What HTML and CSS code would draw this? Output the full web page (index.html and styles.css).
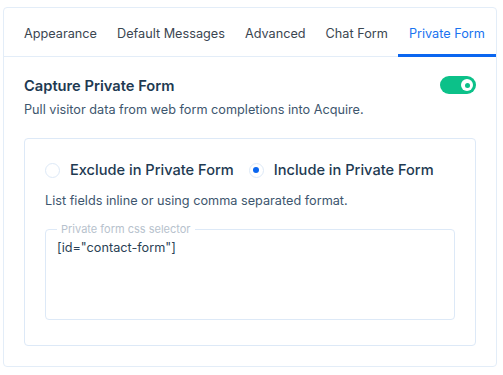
FILE: index.html
```html
<!DOCTYPE html>
<html>
<head>
<meta charset="utf-8">
<link rel="stylesheet" href="styles.css">
</head>
<body>
<div class="card">
  <nav class="tabs">
    <div class="tab">Appearance</div>
    <div class="tab">Default Messages</div>
    <div class="tab">Advanced</div>
    <div class="tab">Chat Form</div>
    <div class="tab active">Private Form</div>
  </nav>
  <div class="content">
    <div class="head">
      <div>
        <div class="title">Capture Private Form</div>
        <div class="sub">Pull visitor data from web form completions into Acquire.</div>
      </div>
      <div class="toggle"><span class="knob"></span></div>
    </div>
    <div class="box">
      <div class="radios">
        <label class="radio"><span class="circle"></span><span class="rlabel">Exclude in Private Form</span></label>
        <label class="radio"><span class="circle checked"></span><span class="rlabel">Include in Private Form</span></label>
      </div>
      <div class="hint">List fields inline or using comma separated format.</div>
      <fieldset class="field">
        <legend>Private form css selector</legend>
        <div class="value">[id="contact-form"]</div>
      </fieldset>
    </div>
  </div>
</div>
</body>
</html>
```
FILE: styles.css
```css
* { box-sizing: border-box; }
html, body { margin: 0; background: #fff; }
body {
  padding: 7px 6px 0 3px;
  font-family: Inter, "Noto Sans", sans-serif;
  -webkit-font-smoothing: antialiased;
}
.card {
  width: 494px;
  height: 360px;
  border: 1px solid #e3edf8;
  border-radius: 4px;
  display: flex;
  flex-direction: column;
}
.tabs {
  display: flex;
  height: 49px;
  padding-left: 10px;
  border-bottom: 1px solid #e3edf8;
}
.tab {
  padding: 0 10px;
  font-size: 12.7px;
  color: #3b4651;
  display: flex;
  align-items: center;
  white-space: nowrap;
  border-bottom: 3px solid transparent;
  margin-bottom: -1px;
  padding-top: 4px;
}
.tab.active {
  color: #1a73f0;
  border-bottom-color: #0a66f0;
  padding: 4px 11px 0;
}
.content {
  padding: 20px 20px 20px;
  flex: 1;
  display: flex;
  flex-direction: column;
}
.head {
  display: flex;
  justify-content: space-between;
  align-items: flex-start;
}
.title {
  font-size: 14.7px;
  font-weight: 600;
  color: #1e3a52;
  line-height: 19px;
}
.sub {
  font-size: 12.7px;
  color: #3d566e;
  margin-top: 5px;
  line-height: 17px;
  white-space: nowrap;
}
.toggle {
  width: 36px;
  height: 18px;
  border-radius: 9px;
  background: #0cc189;
  position: relative;
  margin-top: -1px;
}
.knob {
  position: absolute;
  right: 3px;
  top: 3px;
  width: 12px;
  height: 12px;
  border-radius: 50%;
  background: #fff;
}
.knob::after {
  content: "";
  position: absolute;
  left: 3.5px;
  top: 3.5px;
  width: 5px;
  height: 5px;
  border-radius: 50%;
  background: #0cc189;
}
.box {
  margin-top: 20px;
  flex: 1;
  border: 1px solid #dde9f7;
  border-radius: 4px;
  padding: 20px 20px 25px;
  display: flex;
  flex-direction: column;
}
.radios {
  display: flex;
  gap: 15px;
  height: 22px;
  align-items: center;
}
.radio {
  display: flex;
  align-items: center;
  white-space: nowrap;
}
.circle {
  width: 15px;
  height: 15px;
  border-radius: 50%;
  border: 1px solid #dde9f7;
  margin-right: 10px;
  position: relative;
  background: #fff;
}
.circle.checked::after {
  content: "";
  position: absolute;
  left: 3.5px;
  top: 3.5px;
  width: 6px;
  height: 6px;
  border-radius: 50%;
  background: #0a66f0;
}
.rlabel {
  font-size: 14.6px;
  font-weight: 500;
  color: #1e3a52;
}
.hint {
  font-size: 12.7px;
  color: #3d566e;
  margin-top: 11px;
  line-height: 17px;
  white-space: nowrap;
}
.field {
  margin: 14px 0 0;
  flex: 1;
  border: 1px solid #dde9f7;
  border-radius: 4px;
  padding: 0 11px;
  min-width: 0;
}
.field legend {
  font-size: 11px;
  color: #b7c2cd;
  padding: 0 4px;
  margin-left: 0;
  line-height: 12px;
}
.value {
  font-size: 12.7px;
  color: #2a3f55;
  margin-top: 4px;
  line-height: 17px;
}
```
